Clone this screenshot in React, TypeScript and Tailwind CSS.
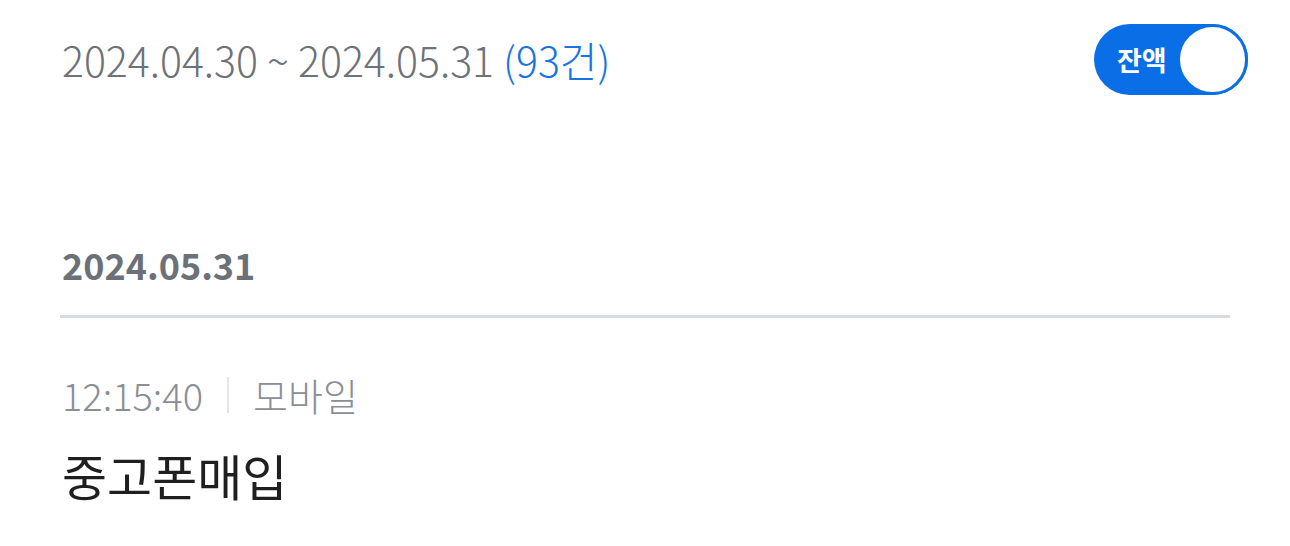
export default function App() {
  return (
    <div
      className="min-h-[546px] w-full bg-white"
      style={{ fontFamily: '"Noto Sans CJK KR", "Noto Sans", sans-serif' }}
    >
      <div className="flex items-center justify-between pt-[24px] pl-[62px] pr-[42px]">
        <p className="text-[41px] font-light leading-none text-[#6d7179]">
          2024.04.30 ~ 2024.05.31 <span className="text-[#1a73e0]">(93건)</span>
        </p>
        <button className="flex h-[71px] w-[154px] items-center rounded-full bg-[#0a6fe6] pl-[23px]">
          <span className="text-[27px] font-bold leading-none text-white">잔액</span>
          <span className="ml-auto h-[71px] w-[71px] rounded-full border-[3px] border-[#0a6fe6] bg-white" />
        </button>
      </div>

      <div className="px-[60px] pt-[151px]">
        <h2 className="pl-[2px] text-[36px] font-bold leading-none text-[#6b7079]">2024.05.31</h2>
        <div className="mt-[33px] h-[3px] w-full bg-[#d6dbdf]" />

        <div className="mt-[58px] flex items-center pl-[2px] text-[38px] font-light leading-none text-[#8a8e96]">
          <span>12:15:40</span>
          <span className="mx-[24px] h-[36px] w-[2px] bg-[#e3e6e9]" />
          <span>모바일</span>
        </div>
        <p className="mt-[36px] pl-[2px] text-[49px] font-normal leading-none text-[#1f1f1f]">중고폰매입</p>
      </div>
    </div>
  );
}
